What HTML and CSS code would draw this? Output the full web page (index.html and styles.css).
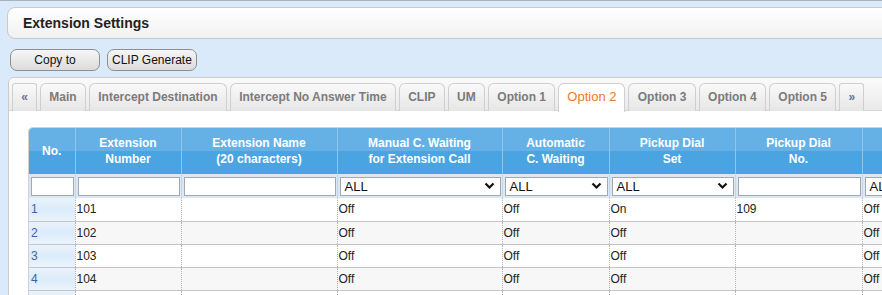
FILE: index.html
```html
<!DOCTYPE html>
<html lang="en">
<head>
    <meta charset="UTF-8">
    <title>Extension Settings</title>
    <link rel="stylesheet" href="styles.css">
</head>
<body>
    <div class="page">
        <div class="title">Extension Settings</div>

        <div class="actions">
            <button class="btn btn-copy">Copy to</button>
            <button class="btn">CLIP Generate</button>
        </div>

        <div class="panel">
            <ul class="tabs">
                <li class="arrow">&laquo;</li>
                <li>Main</li>
                <li>Intercept Destination</li>
                <li>Intercept No Answer Time</li>
                <li>CLIP</li>
                <li>UM</li>
                <li>Option 1</li>
                <li class="active">Option 2</li>
                <li>Option 3</li>
                <li>Option 4</li>
                <li>Option 5</li>
                <li class="arrow">&raquo;</li>
            </ul>

            <div class="grid-wrap">
                <table class="grid">
                    <colgroup>
                        <col style="width:46px">
                        <col style="width:106px">
                        <col style="width:156px">
                        <col style="width:165px">
                        <col style="width:107px">
                        <col style="width:126px">
                        <col style="width:127px">
                        <col style="width:110px">
                    </colgroup>
                    <thead>
                        <tr class="head">
                            <th>No.</th>
                            <th>Extension<br>Number</th>
                            <th>Extension Name<br>(20 characters)</th>
                            <th>Manual C. Waiting<br>for Extension Call</th>
                            <th>Automatic<br>C. Waiting</th>
                            <th>Pickup Dial<br>Set</th>
                            <th>Pickup Dial<br>No.</th>
                            <th></th>
                        </tr>
                        <tr class="filter">
                            <td><div class="inp"></div></td>
                            <td><div class="inp"></div></td>
                            <td><div class="inp"></div></td>
                            <td><div class="inp sel">ALL<svg width="11" height="8" viewBox="0 0 11 8"><path d="M1.5 1.5 L5.5 5.5 L9.5 1.5" fill="none" stroke="#111" stroke-width="2.2"/></svg></div></td>
                            <td><div class="inp sel">ALL<svg width="11" height="8" viewBox="0 0 11 8"><path d="M1.5 1.5 L5.5 5.5 L9.5 1.5" fill="none" stroke="#111" stroke-width="2.2"/></svg></div></td>
                            <td><div class="inp sel">ALL<svg width="11" height="8" viewBox="0 0 11 8"><path d="M1.5 1.5 L5.5 5.5 L9.5 1.5" fill="none" stroke="#111" stroke-width="2.2"/></svg></div></td>
                            <td><div class="inp"></div></td>
                            <td><div class="inp sel">ALL</div></td>
                        </tr>
                    </thead>
                    <tbody>
                        <tr>
                            <td class="no">1</td><td>101</td><td></td><td>Off</td><td>Off</td><td>On</td><td>109</td><td>Off</td>
                        </tr>
                        <tr class="alt">
                            <td class="no">2</td><td>102</td><td></td><td>Off</td><td>Off</td><td>Off</td><td></td><td>Off</td>
                        </tr>
                        <tr>
                            <td class="no">3</td><td>103</td><td></td><td>Off</td><td>Off</td><td>Off</td><td></td><td>Off</td>
                        </tr>
                        <tr class="alt">
                            <td class="no">4</td><td>104</td><td></td><td>Off</td><td>Off</td><td>Off</td><td></td><td>Off</td>
                        </tr>
                        <tr>
                            <td class="no"></td><td></td><td></td><td></td><td></td><td></td><td></td><td></td>
                        </tr>
                    </tbody>
                </table>
            </div>
        </div>
    </div>
</body>
</html>
```

FILE: styles.css
```css
*{
    margin: 0;
    padding: 0;
    box-sizing: border-box;
}
li{
    list-style: none;
}
html, body{
    height: 100%;
    overflow: hidden;
}
body{
    background: #dbeafb;
    border-top: 1px solid #a9b3bd;
    font-family: "Liberation Sans", Arial, sans-serif;
    font-size: 12px;
    color: #222;
}

.page{
    padding: 6px 0 0 7px;
    width: 960px;
}

.title{
    height: 32px;
    line-height: 30px;
    padding-left: 15px;
    font-size: 14px;
    font-weight: bold;
    color: #222;
    background: linear-gradient(#ffffff, #f1f1f1);
    border: 1px solid #c9c9c9;
    border-radius: 8px;
}

.actions{
    display: flex;
    gap: 7px;
    margin-top: 10px;
    padding-left: 3px;
}
.btn{
    height: 22px;
    padding: 0 4px;
    font-family: "Liberation Sans", Arial, sans-serif;
    font-size: 12px;
    color: #111;
    background: linear-gradient(#f6f6f6, #dcdcdc);
    border: 1px solid #8f8f8f;
    border-radius: 7px;
}
.btn-copy{
    width: 90px;
}

.panel{
    margin-top: 6px;
    margin-left: 1px;
    background: #fff;
    border: 1px solid #cbcbcb;
    border-radius: 6px 0 0 0;
    height: 300px;
}

.tabs{
    display: flex;
    gap: 3px;
    height: 33px;
    padding: 5px 0 0 3px;
    background: linear-gradient(#fbfbfb, #e9e9e9);
    border-bottom: 1px solid #d6d6d6;
    border-radius: 6px 0 0 0;
}
.tabs li{
    height: 28px;
    line-height: 26px;
    padding: 0 8.3px;
    font-size: 12px;
    font-weight: bold;
    color: #7b7b7b;
    background: linear-gradient(#f9f9f9, #e6e6e6);
    border: 1px solid #cfcfcf;
    border-bottom: none;
    border-radius: 6px 6px 0 0;
    white-space: nowrap;
}
.tabs li.arrow{
    width: 25px;
    padding: 0;
    text-align: center;
    color: #65739b;
    border-radius: 3px 3px 0 0;
}
.tabs li.active{
    background: #fff;
    color: #ee7a1f;
    font-weight: normal;
    font-size: 13px;
    height: 29px;
    padding: 0 8px;
}

.grid-wrap{
    margin: 16px 0 0 19px;
    border-top: 1px solid #d2d2d2;
    border-left: 1px solid #d2d2d2;
    border-radius: 5px 0 0 0;
    overflow: hidden;
}
.grid{
    table-layout: fixed;
    border-collapse: collapse;
    width: 943px;
}
.grid th{
    height: 46px;
    color: #fff;
    font-weight: bold;
    font-size: 12px;
    line-height: 16px;
    text-align: center;
    vertical-align: middle;
    background: linear-gradient(#65b1e6 0, #65b1e6 50%, #4aa4e1 50%, #4aa4e1 100%);
    border-left: 1px solid #8fc6ec;
}
.grid th:first-child{
    border-left: none;
}

.filter td{
    height: 24px;
    padding: 2px 1px 2px 2px;
    background: #dae8f6;
    border-left: 1px solid #c3d8ec;
}
.filter td:first-child{
    border-left: none;
}
.inp{
    height: 19px;
    background: #fff;
    border: 1px solid #a8a8a8;
    display: flex;
    align-items: center;
    justify-content: space-between;
    padding: 0 5px 0 4px;
    font-size: 13px;
    color: #111;
    white-space: nowrap;
    overflow: hidden;
}

.grid tbody td{
    height: 23px;
    padding: 0 1px;
    font-size: 12px;
    color: #222;
    border-left: 1px dotted #b3b3b3;
    border-bottom: 1px solid #c4c4c4;
    white-space: nowrap;
}
.grid tbody tr.alt td{
    background: #f7f7f7;
}
.grid tbody td.no{
    border-left: none;
    color: #3d63a6;
    padding-left: 2px;
    background: linear-gradient(#e9f3fc, #dcebfa 50%, #e9f3fc) !important;
}
```
